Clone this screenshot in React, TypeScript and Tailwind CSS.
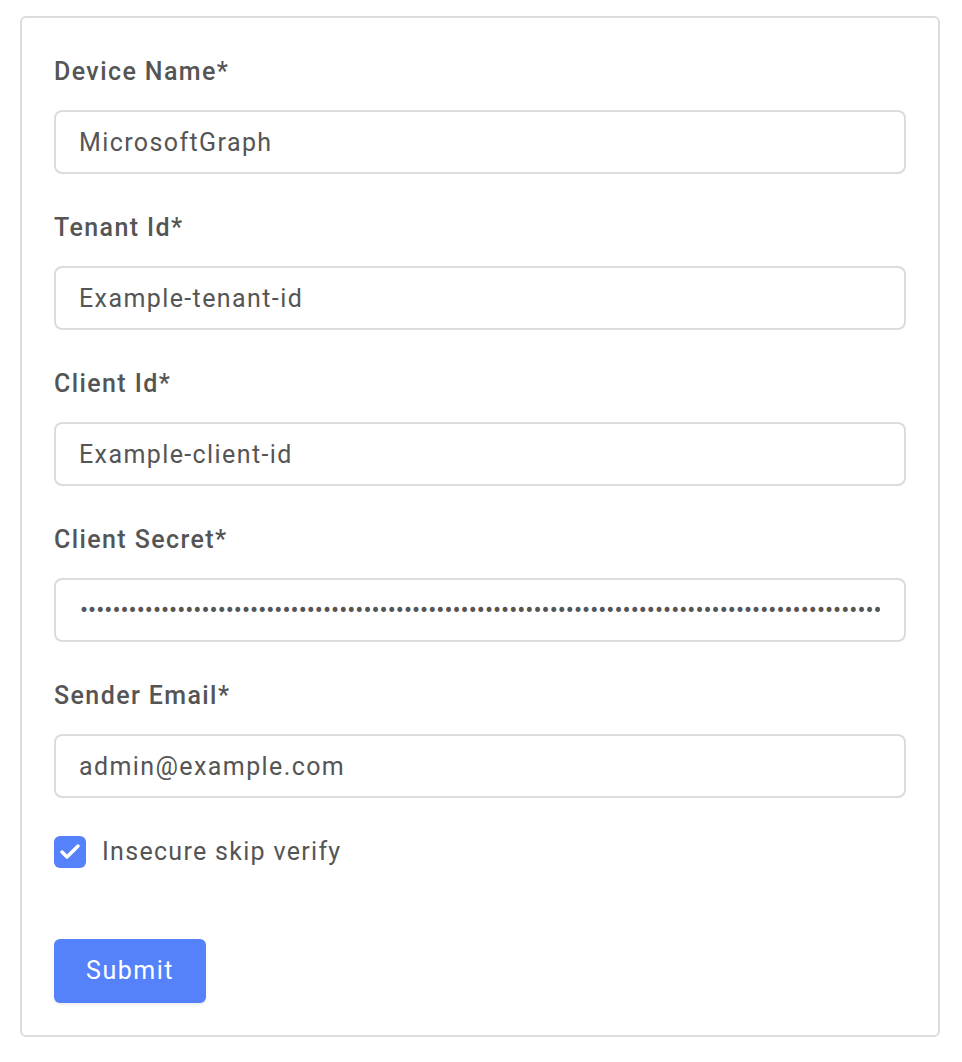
import { Check } from "lucide-react";

const fields = [
  { label: "Device Name*", value: "MicrosoftGraph", type: "text" },
  { label: "Tenant Id*", value: "Example-tenant-id", type: "text" },
  { label: "Client Id*", value: "Example-client-id", type: "text" },
  { label: "Client Secret*", value: "x".repeat(120), type: "password" },
  { label: "Sender Email*", value: "admin@example.com", type: "text" },
];

const App = () => {
  return (
    <div className="min-h-screen bg-white px-5 pt-4 font-['Roboto',sans-serif] text-[#555]">
      <form
        className="w-[920px] rounded-[6px] border-2 border-[#dcdcdc] px-8 pt-9 pb-8"
        onSubmit={(e) => e.preventDefault()}
      >
        <div className="flex flex-col gap-9">
          {fields.map((f) => (
            <div key={f.label} className="flex flex-col gap-5">
              <label className="text-[25px] leading-[36px] font-medium tracking-[1.4px] text-[#555]">
                {f.label}
              </label>
              <input
                type={f.type}
                defaultValue={f.value}
                className={
                  f.type === "password"
                    ? "h-16 w-full rounded-[8px] border-2 border-[#dcdcdc] pl-6 pr-6 text-[24px] text-[#555] outline-none"
                    : "h-16 w-full rounded-[8px] border-2 border-[#dcdcdc] pl-[23px] pr-6 text-[25px] tracking-[1.4px] text-[#555] outline-none"
                }
              />
            </div>
          ))}
        </div>

        {/* Checkbox */}
        <label className="mt-[38px] flex items-center gap-4">
          <span className="flex h-8 w-8 items-center justify-center rounded-[6px] bg-[#5581fa]">
            <Check className="h-6 w-6 text-white" strokeWidth={3.5} />
          </span>
          <span className="text-[25px] leading-8 tracking-[1.3px]">Insecure skip verify</span>
        </label>

        <button
          type="submit"
          className="mt-[71px] h-16 w-[152px] rounded-[6px] bg-[#5581fa] text-[25px] tracking-[1.5px] text-white shadow-[0_2px_3px_rgba(0,0,0,0.08)]"
        >
          Submit
        </button>
      </form>
    </div>
  );
};

export default App;
